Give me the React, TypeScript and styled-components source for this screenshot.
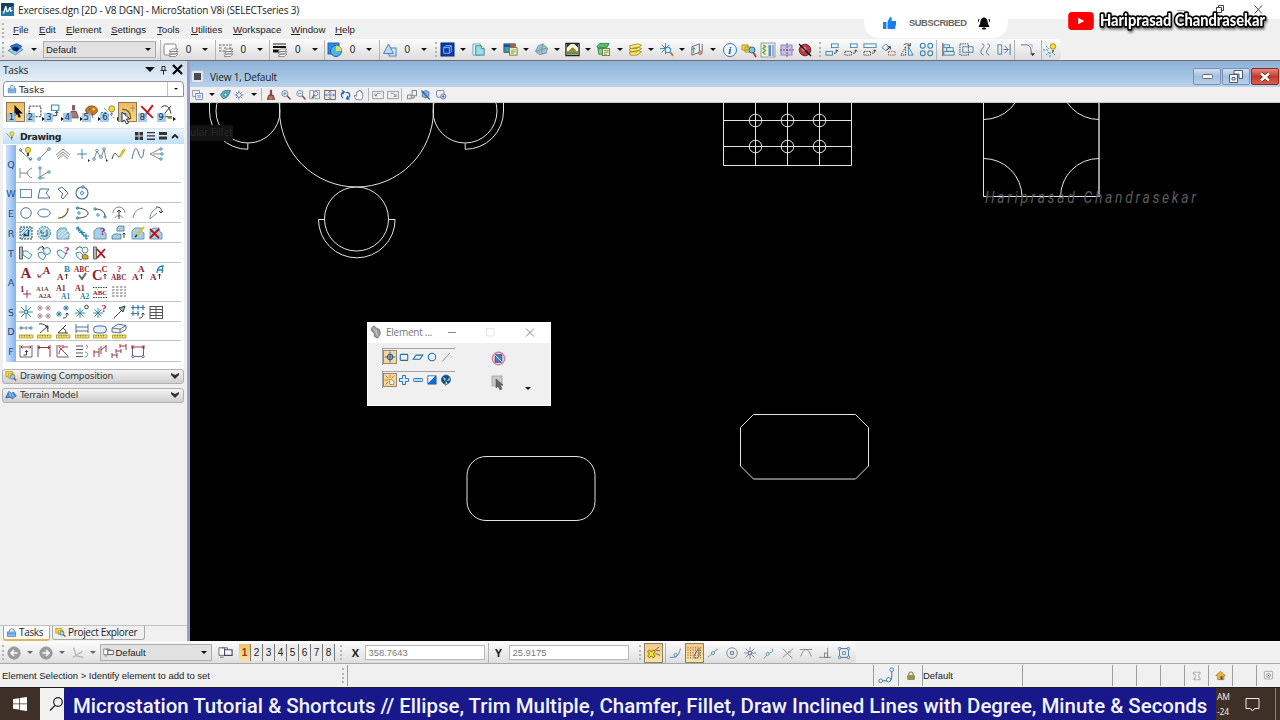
import React from 'react';
import styled, { createGlobalStyle, css } from 'styled-components';

const Global = createGlobalStyle`
  * { box-sizing: border-box; }
  body { margin: 0; background: #f0f0f0; overflow: hidden; }
  svg { display: block; flex: none; }
`;

const ui = '"Open Sans", "Noto Sans", sans-serif';
const arial = '"Liberation Sans", Arial, sans-serif';
const verdana = '"DejaVu Sans", Verdana, sans-serif';

/* ---------- icons ---------- */

const B = '#2b7fa8';
const N = '#3a5f96';
const G = '#6f7a80';
const K = '#2a2a2a';
const R = '#8c2430';

const star = 'M8 2v12M2 8h12M3.8 3.8l8.4 8.4M12.2 3.8l-8.4 8.4';
const ruler = (
  <>
    <rect x="1.5" y="12" width="13.5" height="3" fill="#f2e36a" stroke="#b09a20" strokeWidth=".8" />
    <path d="M4 12v1.6M6.5 12v1.6M9 12v1.6M11.5 12v1.6" stroke="#7d6c10" strokeWidth=".7" />
  </>
);
const hatchShape = <path d="M2 14V6l3-3h6l1 4 2 1v6z" fill="#a9cfe2" stroke="#5b93b3" />;
const layers = (
  <g fill="#fff" stroke="#777" strokeWidth=".8">
    <path d="M6 14l3-2h6l-2.500 2.500H6.500zM6 11.500l3-2h6l-2.500 2.500H6.500zM6 9l3-2h6l-2.500 2.500H6.500z" />
  </g>
);
const T = (p: { x: number; y: number; s?: number; c?: string; children: string }) => (
  <text x={p.x} y={p.y} fontSize={p.s ?? 7} fontWeight="bold" fill={p.c ?? R} stroke="none">
    {p.children}
  </text>
);

const art: Record<string, React.ReactNode> = {
  app: (
    <>
      <rect width="16" height="16" rx="1" fill="#123f63" stroke="none" />
      <path d="M0 10L16 3v13H0z" fill="#1f78a5" stroke="none" />
      <path d="M3 13L6 4l1 6c1 1 3 0 4-5l1 5 2-1" stroke="#fff" strokeWidth="1.6" />
    </>
  ),
  models: (
    <>
      <path d="M1 9l7-4 7 3-7 5z" fill="#9fcdf0" stroke="#4d90c8" />
      <path d="M3 5l6-2.500 5 2.500-5 5z" fill="#2b6fc0" stroke="#1d5aa0" />
      <ellipse cx="8" cy="7.500" rx="3" ry="1.800" fill="#0a2247" stroke="none" />
    </>
  ),
  level: <><rect x="1" y="2" width="12" height="11" rx="1.500" fill="#fff" stroke="#777" />{layers}</>,
  style: <><path d="M1 3h13M1 6h3m2 0h3m2 0h3M1 9h5" stroke="#555" strokeDasharray="2.400 1" />{layers}</>,
  weight: <><path d="M1 2h13" stroke="#111" /><path d="M1 5h13" stroke="#111" strokeWidth="2" /><path d="M1 9h6" stroke="#111" strokeWidth="3" />{layers}</>,
  fill: <><rect x="1" y="1" width="11" height="11" fill="#2d8de0" stroke="#1a5da8" /><circle cx="9" cy="9" r="5.500" fill="#49b5e8" stroke="#1a5da8" /><path d="M9 9V3.500A5.500 5.500 0 0 1 14.500 9z" fill="#d8e25c" stroke="none" /></>,
  trans: <><rect x="7" y="6" width="7" height="8" fill="#dbe9f8" stroke="#3c78bb" /><path d="M6.500 2l5 9.500h-10z" fill="#bcd8f2" stroke="#3c78bb" /></>,
  cube: <><rect x="1" y="1" width="14" height="14" fill="#0e3aa5" stroke="#0a2877" /><path d="M4 6h6v6H4zM4 6l2-2h6v6l-2 2M10 6l2-2" stroke="#8fd0ff" /></>,
  page: <><path d="M2 2h8v12H2z" fill="#d9f1f7" stroke="#7aa0a8" /><path d="M5 4h6l3 3v7H5z" fill="#8fe3ea" stroke="#50717a" /><path d="M11 4v3h3" fill="#fff" stroke="#50717a" /></>,
  refs: <><rect x="1" y="2" width="12" height="9" fill="#39a0a8" stroke="#27435a" /><path d="M1 4h7" stroke="#1d4a90" strokeWidth="2.400" /><path d="M8 4h5" stroke="#d6502c" strokeWidth="2.400" /><rect x="7" y="6" width="8" height="8" fill="#fff8c4" stroke="#6c6c40" /><path d="M8.500 8.500h5M8.500 10.500h5M8.500 12h3" stroke="#4c8a4c" strokeWidth=".8" /></>,
  cell: <><path d="M1.500 10l3-6 5-2 5 4.500-1.500 5.500-7 1.500z" fill="#9fc0cc" stroke="#7590a0" /><path d="M2 10l6-2M8 8l1 5M9.500 2L8 8l6-1.500" stroke="#5e8ca8" strokeWidth=".8" /></>,
  raster: <><rect x="1" y="1.500" width="14" height="13" fill="#fafadf" stroke="#222" strokeWidth="1.400" /><path d="M2 2l4 0-4 4zM14 2v4l-4-4z" fill="#333" stroke="none" /><path d="M3 10c2-1 4-5 6-4l4 4z" fill="#a87c32" stroke="none" /><path d="M2 10h12v3.500H2z" fill="#5f9048" stroke="none" /></>,
  green: <><path d="M1 5l3-3.500h10l-2 4-10 1z" fill="#57c070" stroke="#2c7a3c" /><path d="M2 7h10v6H3z" fill="#7fd08c" stroke="#2c7a3c" /><rect x="7" y="7" width="7.500" height="7.500" fill="#fff8c4" stroke="#6c6c40" /><path d="M8.500 9h5M8.500 11h5M8.500 13h3" stroke="#4c8a4c" strokeWidth=".9" /></>,
  stack: <g fill="#f9ea7a" stroke="#a08a1e" strokeWidth=".9"><path d="M1.500 11l9-2 4 1.500-5 3.500-7 0zM1.500 7.500l9-2 4 1.500-5 3.500-7 0zM1.500 4l9-2 4 1.500-5 3.500-7 0z" /></g>,
  snapfind: <><path d="M7 1v12M1 7h12M3 3l8 8M11 3l-8 8" stroke="#2670a8" /><circle cx="9.500" cy="8.500" r="3" fill="#d5f0ff" stroke="#2670a8" /><path d="M12 11l3 3.500" stroke="#a87432" strokeWidth="1.800" /></>,
  point: <><path d="M2 5l8-3v9l-8 3z" fill="#e9f3f5" stroke="#557" /><path d="M4 12V6M2.500 8L4 6l1.500 2" stroke="#1b8f5c" /><path d="M13 2v9" stroke="#557" /><circle cx="11" cy="11.500" r="2" fill="#e1899b" stroke="#984" /></>,
  info: <><circle cx="8" cy="8" r="6.500" fill="#f4f8ff" stroke="#3a6ec0" strokeWidth="1" /><text x="6.200" y="12" fontSize="11" fontStyle="italic" fontWeight="bold" fill="#1d4ea8" stroke="none">i</text></>,
  search: <><path d="M1 3h6v5H1zM4 5h6v5H4z" fill="#f7dc54" stroke="#a88b1a" /><circle cx="11" cy="8" r="3" fill="#76c7e8" stroke="#226890" /><path d="M12.500 10.500L15 15" stroke="#b33c22" strokeWidth="1.800" /></>,
  lib: <><rect x="1" y="1" width="14" height="14" fill="#f2f2dc" stroke="#8d98a0" /><rect x="8.500" y="3" width="2.500" height="11" fill="#5a8cd4" stroke="none" /><rect x="12" y="3" width="2" height="11" fill="#8ab4e4" stroke="none" /><path d="M3 3l2.500 1.500L3 6.500l2.500 2L3 10.500l2.500 2" stroke="#77a850" strokeWidth="1.500" /></>,
  crossed: <><rect x="2" y="3" width="11" height="10" fill="#c8c0e4" stroke="#8480b4" /><path d="M8 1v14M1 8h14" stroke="#7a3a70" strokeDasharray="2 1" /></>,
  stop: <><circle cx="8" cy="8" r="5.800" fill="#b23a44" stroke="#6c1d28" /><circle cx="7" cy="7" r="2.500" fill="#dd8080" stroke="none" /><path d="M2 2l12 12" stroke="#111" strokeWidth="1.400" /></>,
  copy: <><rect x="7" y="2" width="7" height="4" stroke={B} /><rect x="1" y="10" width="7" height="4" stroke={B} /><path d="M9.500 12c3 0 3-1 3-3.500M11 10l1.500-1.700L14 10" stroke={K} /></>,
  move: <><rect x="7" y="2" width="7" height="4" stroke={B} /><rect x="1" y="10" width="7" height="4" stroke={K} strokeDasharray="1.500 1" /><path d="M9.500 12c3 0 3-1 3-3.500M11 10l1.500-1.700L14 10" stroke={K} /></>,
  scale: <><rect x="1" y="2" width="13" height="4" stroke={B} /><rect x="1" y="10" width="7" height="4" stroke={K} strokeDasharray="1.500 1" /><path d="M9.500 12c3 0 3-1 3-3.500M11 10l1.500-1.700L14 10" stroke={K} /></>,
  rotate: <><path d="M1 6l4-4 4 4-4 3z" stroke={B} /><path d="M6 9l4-4M10 8V5H7" stroke={K} /><path d="M8 10h7v4H8z" stroke="#843" strokeDasharray="1.500 1" /></>,
  mirror: <><path d="M6 5L1 14h5z" stroke={K} strokeDasharray="1.500 1" /><path d="M9 5l5 9H9z" stroke={B} /><path d="M4 3c3-2 5-1 7 1M11 1v3H8" stroke={K} /></>,
  array: <g stroke={B} strokeWidth="1.100"><circle cx="4" cy="4" r="2.600" /><circle cx="12" cy="4" r="2.600" /><circle cx="4" cy="12" r="2.600" /><circle cx="12" cy="12" r="2.600" /></g>,
  align: <><path d="M2 1v14" stroke={K} /><path d="M3 3h6v3H3zM3 10h11v4H3zM6 6h7v4H6z" stroke={B} /></>,
  stretch: <><path d="M1 2h9v12H1z" stroke={K} strokeDasharray="1.500 1" /><path d="M4 5h11v6H4z" stroke={B} /></>,
  wave: <path d="M4 2c5 1 1 4 0 6s-2 4 2 6M10 2c5 1 1 4 0 6s-2 4 2 6" stroke={N} />,
  trim: <><path d="M1 3h4v10H1z" stroke={B} /><path d="M14 2v12M8 4l4 4-4 4M7 8h5" stroke={N} /></>,
  fillet: <><path d="M1 3h5c5 0 6 4 6 9" stroke={N} /><path d="M9 3h4v4" stroke="#aaa" /><path d="M11 12h5l-2.500 3z" fill={K} stroke="none" /></>,
  bulb: <><path d="M4 4l3 3M1 8h5M4 13l3-3M8 10v5M10 10l3 3" stroke={B} strokeDasharray="2 1" /><circle cx="11" cy="4.500" r="2.800" fill="#f5dd3e" stroke="#a48b1c" /><path d="M10 8h2v2h-2z" fill="#777" stroke="none" /></>,
  vattr: <><rect x="1" y="2" width="9" height="8" stroke={G} /><rect x="5" y="6" width="9" height="8" fill="#fff" stroke={N} /><path d="M7 9h5M7 11h5" stroke={N} /></>,
  vstyle: <><path d="M2 9c1-5 6-7 12-6-1 6-5 10-9 10z" fill="#57b5bd" stroke="#1d6f8c" /><circle cx="8" cy="8" r="2" fill="#c8eef0" stroke="#1d6f8c" /></>,
  sun: <><path d={star} stroke={N} /><circle cx="8" cy="8" r="3" fill="#fff" stroke={N} /></>,
  brush: <><path d="M8 1v7" stroke="#8a4a3a" strokeWidth="3" /><path d="M5 8h6l2 6H3z" fill="#a65c48" stroke="#5b3025" /><path d="M6.500 10v4M9 10v4" stroke="#e0b0a0" /></>,
  zin: <><circle cx="6.500" cy="6" r="4" stroke={N} /><path d="M4.500 6h4M6.500 4v4" stroke={N} /><path d="M9.500 9l4.500 5" stroke="#8a4a3a" strokeWidth="2" /></>,
  zout: <><circle cx="6.500" cy="6" r="4" stroke={N} /><path d="M4.500 6h4" stroke={N} /><path d="M9.500 9l4.500 5" stroke="#8a4a3a" strokeWidth="2" /></>,
  warea: <><path d="M1 2h5v11H1zM8 2h6v11H8z" stroke={G} /><circle cx="9" cy="6" r="2.800" fill="#fff" stroke={N} /><path d="M7 8l-3 4" stroke={N} strokeWidth="1.400" /></>,
  fit: <><rect x="1" y="2" width="14" height="12" stroke={K} /><path d="M8 3v10M2 8h12M6 5l2-2 2 2M6 11l2 2 2-2M4 6L2 8l2 2M12 6l2 2-2 2" stroke={N} /></>,
  rot: <><path d="M5 12C2 9 3 5 6 4M4 2l3 2-2 3M9 5c4-2 6 2 5 5-1 2-3 3-4 3M12 9l-2 4 4 1" stroke="#1a6cc0" strokeWidth="1.700" /></>,
  hand: <path d="M4 14L1.500 9 3 8l1.500 2V4.500h1.700V3h1.800V2h1.800v1.500h1.700V5H13v5l-1.500 4.500z" fill="#fff" stroke={N} />,
  vprev: <><rect x="1" y="3" width="14" height="10" stroke={G} /><path d="M11 6C8 5 6 6 5 9M4 6v3h3" stroke={N} /></>,
  vnext: <><rect x="1" y="3" width="14" height="10" stroke={G} /><path d="M5 6c3-1 5 1 6 3M12 7v3H9" stroke={N} /></>,
  vcopy: <><path d="M8 2h6v7H8zM2 8h5v5H2zM11 9v3H7" stroke={G} strokeWidth="1.200" /></>,
  cubeclip: <><path d="M3 4l5-2 4 2v5l-4 3-5-2z" fill="#81b6e2" stroke={N} /><path d="M2 2l11 12" stroke={N} strokeWidth="1.600" /></>,
  clipmask: <><rect x="2" y="2" width="10" height="9" rx="2" stroke={N} /><circle cx="11" cy="10" r="3.500" fill="#cfd8e8" stroke={N} /><path d="M11 8v4M9 10h4" stroke={N} /></>,
  house: <><path d="M2 7h12v7H2z" fill="#8fc4ea" stroke="#2d6ca4" /><path d="M5 7V4l3-2 4 2v3" fill="#cfe6f8" stroke="#2d6ca4" /><path d="M2 10h12" stroke="#2d6ca4" /></>,
  arrow: <path d="M7 1v11l2.500-2.500L11 13l2-.8L11.500 9H15z" fill="#111" stroke="none" />,
  fence: <rect x="3" y="2" width="11" height="10" stroke={K} strokeDasharray="2 1" />,
  copyT: <><rect x="7" y="1" width="7" height="5" stroke={B} /><path d="M12 7v4H8M10.500 8.500L12 7l1.500 1.500" stroke={K} /></>,
  brushT: <><path d="M10 1v5" stroke="#8a5a62" strokeWidth="3" /><path d="M7.500 7h5l2 6H7z" fill="#a87a7a" stroke="#6d4a54" /></>,
  palette: <><ellipse cx="9" cy="6" rx="5.500" ry="4.200" fill="#d0742a" stroke="#8c4814" /><circle cx="7" cy="5" r="1.200" fill="#2e9e52" stroke="none" /><circle cx="11" cy="5" r="1.200" fill="#e8db40" stroke="none" /><path d="M10 9v4" stroke="#843" /></>,
  filletT: <><path d="M3 5c6 0 8 3 8 9" stroke="#6c6a3a" strokeWidth="1.300" /><path d="M13 1v6M10 4h5M3 9h4" stroke="#a18a5c" strokeWidth=".8" /></>,
  xred: <path d="M3 2l11 11M14 1L5 13" stroke="#c4161c" strokeWidth="1.800" />,
  measure: <><path d="M5 3c4-3 8-1 9 6M8 9l6-7M3 12h12" stroke={K} /><path d="M11 13h4" stroke="#a48b1c" strokeWidth="2" /></>,
  lineb: <><path d="M2 4l4 4 7 6" stroke={G} /><circle cx="12.500" cy="13" r="1.300" stroke={B} /><circle cx="10" cy="4" r="2.600" fill="#f5e03e" stroke="#a48b1c" /><path d="M9 7h2v3H9z" fill="#443" stroke="none" /><circle cx="2.500" cy="4" r="1.200" stroke={B} /></>,
  line: <><path d="M4 12l8-8" stroke={G} /><circle cx="3" cy="13" r="1.300" stroke={B} /><circle cx="13" cy="3" r="1.300" stroke={B} /></>,
  multi: <path d="M1 9l7-6 7 6M3 13l5-4.500 5 4.500M2 11l6-5.200 6 5.200" stroke={G} strokeWidth=".9" />,
  plus: <><path d="M8 3v10M3 8h10" stroke={B} /><path d="M14 13v3l2-1.500z" fill={K} stroke="none" /></>,
  poly: <><path d="M2 13l3-8 4 7 3-9 2 10" stroke={G} /><g stroke={B} strokeWidth=".8" fill="#fff"><circle cx="5" cy="4.500" r="1.300" /><circle cx="12" cy="3" r="1.300" /><circle cx="2" cy="13" r="1.300" /><circle cx="9" cy="11" r="1.300" /></g><path d="M14 13v3l2-1.500z" fill={K} stroke="none" /></>,
  stream: <><path d="M1 13c4-13 5 1 8-3l3-6" stroke={K} /><path d="M9 11l5-8" stroke="#d8c83e" strokeWidth="2.500" /></>,
  curve: <path d="M2 13C5-2 7 2 9 8s4 6 5-5" stroke={N} />,
  angle: <><path d="M12 3L2 8l10 5M5 8h9" stroke={G} /><g stroke={B} fill="#fff"><circle cx="13" cy="3" r="1.200" /><circle cx="14" cy="8" r="1.200" /><circle cx="13" cy="13" r="1.200" /></g></>,
  mindist: <path d="M2 3v10M2 8h7M14 3c-6 2-6 8 0 10" stroke={G} />,
  perp: <><path d="M4 2v11M4 12l8-5M2 13h7" stroke={G} /><circle cx="4" cy="3" r="1.200" fill="#fff" stroke={B} /><circle cx="13" cy="7" r="1.200" fill="#fff" stroke={B} /><circle cx="4" cy="13" r="1.200" fill="#fff" stroke={B} /></>,
  rect: <rect x="2.500" y="4.500" width="11" height="8" stroke="#4a7fb4" />,
  shape: <path d="M2 13l2-9h9l-3 4 4 5z" stroke={N} />,
  ortho: <path d="M3 4l4-2 6 6-5 6-2-2 2-3z" stroke={N} />,
  polygon: <><circle cx="8" cy="8" r="6" stroke="#4a6ab4" strokeWidth="1.100" /><circle cx="8" cy="8" r="1.500" stroke={B} /><circle cx="9" cy="2" r="1.200" fill="#fff" stroke={N} /></>,
  circle: <circle cx="8" cy="8" r="5.300" stroke="#3d648c" />,
  ellipse: <ellipse cx="8" cy="8" rx="6.200" ry="4" stroke="#3d648c" />,
  arc: <path d="M3 13c6 0 10-4 10-10" stroke="#7a6a28" strokeWidth="1.200" />,
  half: <><path d="M3 3c8 0 12 4 11 6-1 3-6 4-11 4" stroke={K} strokeWidth=".9" /><circle cx="3.500" cy="3" r="1.200" stroke={B} /><circle cx="3.500" cy="13" r="1.200" stroke={B} /><circle cx="5" cy="8" r="1.200" stroke={B} /></>,
  quarter: <><path d="M3 4c7 0 10 3 10 8" stroke={K} strokeWidth=".9" /><circle cx="3" cy="4" r="1.200" stroke={B} /><circle cx="13" cy="12" r="1.200" stroke={B} /><circle cx="6" cy="10" r="1.200" stroke={B} /></>,
  arcup: <><path d="M2 8a6 6 0 1 1 12 0M4 13c1-3 7-3 8 0" stroke={G} /><path d="M8 5v9M6 7l2-2 2 2" stroke={K} /></>,
  arcs: <path d="M3 13c1-6 4-9 10-10" stroke={G} />,
  arcm: <><path d="M2 14c0-6 3-9 7-11M2 14l7-6" stroke={G} /><path d="M8 2c5 0 6 2 5 6M11 6l2 2 2-2" stroke={K} /></>,
  hatch: <><rect x="2" y="2" width="12" height="12" fill="#c7e2ee" stroke={K} strokeDasharray="2 1" /><path d="M3 7l4-4M3 11l8-8M4 14l9-10" stroke={B} strokeWidth=".8" /><path d="M5.500 10.500h5V5M5.500 10.500l2-2" stroke="#17495f" strokeWidth="1.300" /></>,
  xhatch: <><circle cx="8" cy="8" r="6.500" fill="#a9d4e4" stroke={B} strokeDasharray="2 1" /><path d="M3 7l4-4M3 11l8-8M5 13l8-8" stroke="#fff" strokeWidth=".8" /><path d="M5 11h6V5M5 5v3h3" stroke="#17495f" /></>,
  pattern: <>{hatchShape}<path d="M4 13L13 5M3 10l7-6M7 14l7-5" stroke="#fff" strokeWidth=".7" /></>,
  lpat: <path d="M2 4h5M4.500 1.500v5M5 7.500h6M8 5v5M9 11h6M12 8.500v6M2.500 2l11 12" stroke="#2d86b8" strokeWidth="1.200" />,
  patq: <>{hatchShape}<T x={8} y={10} s={11} c="#a0149a">?</T></>,
  patm: <><path d="M6 6V3l2-2h5v5z" fill="#a9cfe2" stroke="#4b7f9b" /><path d="M1 14v-3l2-2h7v5z" fill="#a9cfe2" stroke="#4b7f9b" /><path d="M13 13V8M11.500 9.500L13 8l1.500 1.500" stroke={K} /></>,
  pate: <>{hatchShape}<path d="M7 10l7-8" stroke="#d8c23e" strokeWidth="2.500" /><path d="M5 12l2-2" stroke={K} strokeWidth="1.500" /></>,
  patx: <>{hatchShape}<path d="M2 4l9 9M11 4l-9 9" stroke="#b3141c" strokeWidth="1.800" /></>,
  tag: <><path d="M1.500 2h3v12h-3z" fill="#b8b8b8" stroke="#555" /><path d="M5 6h4l5 4-3 4-6-4z" fill="#e9f6fb" stroke="#4b7f9b" /></>,
  tag2: <><path d="M2 8l4-1 4 4-3 4-4-3z" fill="#e9f6fb" stroke="#4b7f9b" /><circle cx="11" cy="6" r="3.500" fill="#e9f6fb" stroke="#4b7f9b" /><path d="M2 5c1-3 4-4 6-2M6 1l2 2-2 1.500" stroke={K} /></>,
  tagq: <><path d="M2 6l4-1 5 4-3 5-5-4z" fill="#e9f6fb" stroke="#4b7f9b" /><T x={9} y={9} s={11} c="#a0149a">?</T></>,
  tag3: <><path d="M2 8l4-1 4 4-3 4-4-3z" fill="#e9f6fb" stroke="#4b7f9b" /><circle cx="11" cy="5" r="3" fill="#e9f6fb" stroke="#4b7f9b" /><path d="M8 11l3-2 3 2v3H9z" fill="#d8a53a" stroke="#8c6414" /><path d="M2 5c1-3 4-4 6-2" stroke={K} /></>,
  tagx: <><path d="M1.500 2h3v12h-3z" fill="#b8b8b8" stroke="#555" /><path d="M5 4l8 9M13 4l-8 9" stroke="#b3141c" strokeWidth="1.800" /></>,
  A1: <T x={2.5} y={13} s={15}>A</T>,
  A2: <><T x={7} y={9} s={10}>A</T><path d="M8 8c-2 1-3 3-6 4M2 9v3h3" stroke={R} /></>,
  A3: <><T x={2} y={15} s={9}>A</T><T x={9} y={7} s={9} c={B}>B</T><path d="M11.500 14V9M10 10.500L11.500 9l1.500 1.500" stroke={K} /></>,
  A4: <><T x={0} y={7} s={7.3}>ABC</T><path d="M5 10l3 4 4-6" stroke="#666" strokeWidth="2" /></>,
  A5: <><T x={0} y={15} s={14.5}>C</T><T x={9.5} y={7} s={8.5}>C</T><path d="M13 14V9M11.500 10.500L13 9l1.500 1.500" stroke={K} /></>,
  A6: <><T x={6} y={7} s={9} c="#b0207a">?</T><T x={0} y={14.5} s={7.3}>ABC</T></>,
  A7: <><T x={2} y={15} s={9}>A</T><T x={8} y={7} s={9}>A</T><path d="M11.500 14V9M10 10.500L11.500 9l1.500 1.500" stroke={K} /></>,
  A8: <><T x={2} y={15} s={9}>A</T><path d="M9 8c0-4 2-7 6-7-1 3 0 5-1 7M9 5h5" stroke={B} strokeWidth="1.300" /><path d="M11.500 14V9M10 10.500L11.500 9l1.500 1.500" stroke={K} /></>,
  A9: <><T x={2} y={8} s={9}>1</T><path d="M9 6v8M5 10h8" stroke={R} /></>,
  A10: <><T x={0} y={7} s={6.5} c="#555">A1A</T><T x={2.5} y={14} s={6.5}>A2A</T></>,
  A11: <><T x={1} y={7} s={8}>A1</T><T x={6} y={14.5} s={7.5} c={B}>A1</T></>,
  A12: <><T x={1} y={7} s={8}>A1</T><T x={6} y={14.5} s={7.5} c={B}>A2</T></>,
  A13: <><path d="M1 3.500h14M1 13.500h14" stroke={K} strokeDasharray="1.500 1" /><T x={0.8} y={11} s={6.8}>ABC</T></>,
  A14: <path d="M1 3h14M1 6h14M1 9h14M1 12h14" stroke="#555" strokeDasharray="2.500 1.500" strokeWidth=".9" />,
  star1: <><path d="M8 1v14M1 8h14M3 3l10 10M13 3L3 13" stroke={B} /><circle cx="8" cy="8" r="1.500" fill="#fff" stroke={B} /></>,
  star4: <g stroke="#b0808a"><path d="M4 1v6M1 4h6M2 2l4 4M6 2L2 6M12 1v6M9 4h6M10 2l4 4M14 2l-4 4M4 9v6M1 12h6M2 10l4 4M6 10l-4 4M12 9v6M9 12h6M10 10l4 4M14 10l-4 4" strokeWidth=".8" /></g>,
  star2: <><path d="M11 1v6M8 4h6M9 2l4 4M13 2L9 6M4 7v6M1 10h6M2 8l4 4M6 8l-4 4" stroke={B} /><path d="M8 14c3 0 4-1 4-5M10.500 10.500L12 9l1.500 1.500" stroke={K} /></>,
  staro: <><path d="M6 4v10M1 9h10M2.500 5.500l7 7M9.500 5.500l-7 7" stroke={B} /><circle cx="12.500" cy="3" r="1.800" stroke={K} /></>,
  starq: <><path d="M6 4v10M1 9h10M2.500 5.500l7 7M9.500 5.500l-7 7" stroke={B} /><T x={9.5} y={8} s={10} c="#a0149a">?</T></>,
  leader: <><path d="M3 14l8-8" stroke={K} /><path d="M8 4l6-2-2 6z" fill="#76c7c0" stroke={K} /></>,
  stars: <><path d="M3 1v5M1 3.500h5M8 1v5M6 3.500h5M13 1v5M11 3.500h4M3 7v5M1 9.500h5M8 7v5M6 9.500h3" stroke={B} strokeWidth="1.200" /><path d="M9 14c3 0 4-1 4-5M11.500 10.500L13 9l1.500 1.500" stroke={K} /></>,
  table: <><rect x="2" y="2.500" width="12.500" height="12" stroke="#444" /><path d="M2 5.500h12M2 8.500h12M2 11.500h12M8 2.500v12" stroke="#444" /></>,
  D1: <><path d="M3 5h3M10 5h3" stroke={B} /><circle cx="3" cy="5" r="1.200" stroke={B} /><circle cx="8" cy="5" r="1.200" stroke={G} /><circle cx="13" cy="5" r="1.200" stroke={B} />{ruler}</>,
  D2: <><path d="M3 1c5-1 9 2 9 8M4 10l8-7M9 3h3v3" stroke={K} />{ruler}</>,
  D3: <><path d="M3 10l8-8M3 10h10M8 5c2 1 3 3 3 5" stroke={K} />{ruler}</>,
  D4: <><path d="M2 1v9M14 1v9M2 4h12M2 8h12" stroke={N} />{ruler}</>,
  D5: <><rect x="1.500" y="3" width="13" height="7" rx="3.500" fill="#e5f2fb" stroke={N} />{ruler}</>,
  D6: <><path d="M1 5l6-4 8 1.500v4l-6 3.500-8-1zM1 5l8 1 6-3.500M9 6v4" fill="#eee" stroke="#4d6488" />{ruler}</>,
  F1: <><path d="M2 2v12h12V2" stroke="#555" /><path d="M3 4h10M4.500 2.500L3 4l1.500 1.500M11.500 2.500L13 4l-1.500 1.500" stroke={R} /><path d="M5.500 12h3V7.500M7 9l1.500-1.500L10 9" stroke={K} /></>,
  F2: <path d="M2 2v12M14 2v12M2 4.500h12M4 3L2 4.500 4 6M12 3l2 1.500L12 6" stroke={R} />,
  F3: <><path d="M2 2v12h12" stroke="#555" /><path d="M4 4l9 9M4 11C4 6 8 3 13 4M3 3h6" stroke={R} /></>,
  F4: <><path d="M2 3h7M2 6.500h7M2 10h7M2 13.500h7" stroke="#444" /><path d="M12 2c3 1 1 3 0 4M11 9c4 0 3 5 0 5" stroke={G} /></>,
  F5: <path d="M2 14V7M7 14V5M2 9h5M9 7l5-4M9 11V3M14 9V2" stroke={R} />,
  F6: <path d="M5 8h5M5 6v4M10 6v4M1 12h5M1 10v5M6 10v5M9 3h6M9 1v4M15 1v6" stroke={R} />,
  F7: <><path d="M2.500 4v9.500h11V4" stroke="#555" /><path d="M2 2v4M14 2v4M2 4h12M4 2.500L2.500 4 4 5.500M12 2.500L13.500 4 12 5.500" stroke={R} /><circle cx="3" cy="13.500" r="1.200" fill="#fff" stroke={N} /><circle cx="13" cy="13.500" r="1.200" fill="#fff" stroke={N} /></>,
  dcomp: <><path d="M1 2h9v7H1z" fill="#f6d63a" stroke="#a88b1a" /><path d="M5 5h7v6H5z" fill="#f6e88a" stroke="#a88b1a" /><circle cx="10" cy="9" r="3" fill="#9bd0e8" stroke={N} /><path d="M12 11l3 3" stroke="#b33c22" strokeWidth="1.800" /></>,
  terrain: <><path d="M1 12l4-9 4 3 2-2 4 5-5 4-3-2z" fill="#4f94d4" stroke="#1e5592" /><path d="M5 3l3 7M9 6l3 5" stroke="#cfe6f8" /></>,
  drawhead: <><path d="M2 3l5 6 4 5" stroke={G} /><circle cx="10" cy="4" r="3" fill="#f5e03e" stroke="#a48b1c" /><path d="M9 8h2v3H9z" fill="#443" stroke="none" /></>,
  target: <><circle cx="8" cy="8" r="3.500" stroke="#1a5f9c" strokeWidth="1.400" /><path d="M8 1v14M1 8h14" stroke="#1a5f9c" strokeWidth="1.200" /></>,
  eblock: <rect x="3" y="4.500" width="10" height="8" rx="1" stroke="#1e6fa8" strokeWidth="1.400" />,
  epara: <path d="M5.500 5.500h9l-4 5.500h-9z" stroke="#1e6fa8" strokeWidth="1.400" />,
  ecircle: <circle cx="8" cy="8" r="5" stroke="#1e6fa8" strokeWidth="1.400" />,
  eline: <path d="M3 14L13 3" stroke="#888" strokeWidth="1.300" />,
  enew: <><path d="M2 2l4 4M8 1v4M14 2l-4 4M1 8h4M2 14l4-4" stroke="#b87a28" strokeWidth="1.300" /><path d="M7 7l6 2v5H8z" fill="#fff" stroke="#8a6a3a" /></>,
  eadd: <path d="M6 2h4v4h4v4h-4v4H6v-4H2V6h4z" fill="#d6ecfa" stroke="#1e6fa8" strokeWidth="1.200" />,
  esub: <rect x="2" y="6" width="12" height="4" rx="1" fill="#bcdcf2" stroke="#1e6fa8" strokeWidth="1.200" />,
  einv: <><rect x="2.500" y="2.500" width="11" height="11" fill="#0f6cd0" stroke="#1558a0" /><path d="M3 3h9l-9 9z" fill="#fff" stroke="none" /></>,
  eall: <><circle cx="8" cy="7.500" r="6" fill="#12507e" stroke="#0c3c60" /><path d="M4 4l4 2-2 4zM9 9l4-5v5z" fill="#8fd0f0" stroke="none" /><path d="M7 8v7l3-2" fill="#fff" stroke="#222" strokeWidth=".8" /></>,
  edisable: <><circle cx="8" cy="8" r="6.600" fill="#f6dbe2" stroke="#cf7d90" strokeWidth="1.500" /><path d="M4.500 4h7v8h-7z" fill="#4d84be" stroke="#1c4684" /><path d="M4 4l8 8" stroke="#d8e8f8" /></>,
  ecursor: <><rect x="2" y="1" width="10" height="10" fill="#c9c9c9" stroke="#a5a5a5" /><path d="M6 4v9l2-2 2 4 2-1-2-4h3z" fill="#666" stroke="#555" strokeWidth=".6" /></>,
  dlg: <><path d="M3 3l3-2 3 3 3 1 1 5-3 5-4-2 0-4-3-2z" fill="#9a9a9a" stroke="#6e6e6e" /><path d="M5 3l4 8M8 5l2 8" stroke="#d0d0d0" /></>,
  back: <><circle cx="8" cy="8" r="7" fill="#9c9c9c" stroke="#8a8a8a" /><path d="M12 8H5M8 4.500L4.500 8 8 11.500" stroke="#fff" strokeWidth="1.600" /></>,
  fwd: <><circle cx="8" cy="8" r="7" fill="#9c9c9c" stroke="#8a8a8a" /><path d="M4 8h7M8 4.500l3.500 3.500L8 11.500" stroke="#fff" strokeWidth="1.600" /></>,
  axis: <path d="M3 2l3 9M5 11l9 2M5 11l-3 2M7 10l6-4" stroke="#b0b0b0" strokeWidth="1.300" />,
  vgroup: <><path d="M1 3h6v8H1z" fill="#fff" stroke="#556" /><path d="M7 5h8v6H7z" fill="#fff" stroke="#446" strokeWidth="1.200" /><path d="M2 13h4M4 3h6v2" stroke="#556" /></>,
  snapx: <><path d="M8 7l6-5M10 9l5 2M11 6h4" stroke="#555" /><path d="M2.500 6l6.500 7M9 6l-6.500 7" stroke="#6e6010" strokeWidth="3.400" /><path d="M3 6.500l5.500 6M8.500 6.500L3 12.500" stroke="#f9ee3a" strokeWidth="2" /></>,
  n1: <><path d="M1 14h5c4 0 7-5 8-11" stroke={N} /><circle cx="8" cy="11" r="2" stroke={B} /></>,
  n2: <><path d="M2 2v12M4.500 2v12M7 2v12M9.500 2v12M12 2v12M14.500 2v12" stroke="#a8743e" strokeDasharray="1.500 1" /><path d="M13 3v8c-2 3-5 3-5 0l4-7" stroke={N} strokeWidth=".8" /></>,
  n3: <><path d="M2 13L14 3" stroke={G} /><circle cx="8" cy="8" r="1.700" fill="#fff" stroke={B} /></>,
  n4: <><circle cx="8" cy="8" r="6" stroke={G} /><rect x="6.500" y="6.500" width="3" height="3" stroke={N} /></>,
  n5: <><path d="M8 1v14M1 8h14M3 3l10 10M13 3L3 13" stroke={G} /><circle cx="8" cy="8" r="2" fill="#fff" stroke={N} /></>,
  n6: <><path d="M2 14c3-1 3-5 6-6s5 0 4-5" stroke={G} /><circle cx="6.500" cy="9" r="1.700" fill="#fff" stroke={B} /></>,
  n7: <><path d="M2 3l11 11M14 3L2 13" stroke={G} /><path d="M9 6l2 2" stroke={N} /></>,
  n8: <path d="M1 4h14M2 12c2-6 4-8 6-8s4 2 6 8" stroke={G} />,
  n9: <><path d="M1 13h14M11 13V2" stroke={G} /><rect x="7.500" y="8" width="3.500" height="5" stroke={G} /></>,
  n10: <><rect x="3" y="3" width="10" height="10" stroke={N} /><rect x="6.500" y="6.500" width="3" height="3" stroke={B} /><g fill="#e7f2ff" stroke={N}><circle cx="3" cy="3" r="1.500" /><circle cx="13" cy="3" r="1.500" /><circle cx="3" cy="13" r="1.500" /><circle cx="13" cy="13" r="1.500" /></g></>,
  snapmode: <><path d="M3 13h8c2 0 2-2 2-9" stroke={N} /><circle cx="2.500" cy="13" r="1.700" fill="#fff" stroke={B} /><circle cx="10" cy="12" r="2" fill="#fff" stroke={B} /><circle cx="13" cy="2.500" r="1.700" fill="#fff" stroke={B} /></>,
  lock: <><path d="M4.500 7V5a3.500 3.500 0 0 1 7 0v2" stroke="#6e6c28" strokeWidth="1.500" /><rect x="2.500" y="7" width="11" height="6.500" rx="1" fill="#9a9640" stroke="#6a6824" /></>,
  scroll: <path d="M2 2h11v3h-2v6h2v3H3v-2h2V5H2z" fill="#f6f6f6" stroke="#777" />,
  home: <><path d="M1 8l7-6 7 6-2 1v5H4V9z" fill="#f0b336" stroke="#9c6a14" /><path d="M8 9h3v5H8z" fill="#3d4a9a" stroke="none" /></>,
  disk: <><rect x="2" y="2" width="12" height="11" rx="1" fill="#eee" stroke="#888" /><circle cx="8" cy="8" r="3" stroke="#777" /><circle cx="8" cy="8" r="1" fill="#555" stroke="none" /></>,
};

const Icon = ({ n, s = 16 }: { n: string; s?: number }) => (
  <svg width={s} height={s} viewBox="0 0 16 16" fill="none" strokeWidth=".9" fontFamily='"Liberation Serif", serif'>
    {art[n]}
  </svg>
);

/* ---------- shared parts ---------- */

const Slot = styled.span<{ $w: number; $pressed?: boolean }>`
  flex: none;
  width: ${(p) => p.$w}px;
  height: 20px;
  display: flex;
  align-items: center;
  justify-content: center;
  ${(p) => p.$pressed && css`background: linear-gradient(#f6c986, #fbe0a4); border: 1px solid #8b8164;`}
`;
const Caret = styled.i<{ $c?: string; $s?: number }>`
  border: ${(p) => p.$s ?? 3}px solid transparent;
  border-top: ${(p) => (p.$s ?? 3) + 0.5}px solid ${(p) => p.$c ?? '#111'};
  border-bottom: 0;
`;
const Divider = styled.i<{ $h?: number }>`
  flex: none;
  width: 1px;
  height: ${(p) => p.$h ?? 20}px;
  background: #b4b4b4;
`;
const Grip = styled.i`
  flex: none;
  width: 3px;
  height: 15px;
  border-left: 2px dotted #b5b5b5;
`;
const Spacer = styled.i<{ $w: number }>`
  flex: none;
  width: ${(p) => p.$w}px;
`;
const Push = styled.i`
  margin-left: auto;
`;

/* ---------- window frame ---------- */

const Window = styled.div`
  position: relative;
  width: 1280px;
  height: 720px;
  display: flex;
  flex-direction: column;
  background: #f0f0f0;
  color: #222;
  overflow: hidden;
`;
const TitleBar = styled.header`
  height: 19px;
  flex: none;
  background: #fff;
  display: flex;
  align-items: center;
  padding: 0 17px 0 1px;
  font: 10px/18px ${ui};
  letter-spacing: -0.18px;
  white-space: nowrap;
`;
const TitleText = styled.span`
  margin-left: 4px;
  flex: 1;
`;
const MenuBar = styled.nav`
  height: 20px;
  flex: none;
  display: flex;
  align-items: center;
  padding: 2px 0 0 2px;
  font: 9.700px/18px ${arial};
`;
const MenuItem = styled.span<{ $w: number }>`
  width: ${(p) => p.$w}px;
  white-space: nowrap;
  &::first-letter { text-decoration: underline; }
`;
const ToolRow = styled.div`
  height: 22px;
  flex: none;
  display: flex;
  border-bottom: 1px solid #6c6f74;
`;
const ToolStrip = styled.div`
  width: 1061px;
  display: flex;
  align-items: center;
  background: linear-gradient(#fdfdfd, #dcdcdc);
  border-radius: 0 4px 4px 0;
  font: 10px ${arial};
`;
const Combo = styled.div<{ $w: number }>`
  flex: none;
  width: ${(p) => p.$w}px;
  height: 17px;
  display: flex;
  align-items: center;
  justify-content: space-between;
  padding: 0 4px 0 2px;
  background: #e1e1e1;
  border: 1px solid #adadad;
  font: 9.500px ${arial};
`;
const ComboLabel = styled.span`
  display: flex;
  align-items: center;
  gap: 2px;
`;
const Body = styled.div`
  height: 580px;
  flex: none;
  display: flex;
`;

/* ---------- task panel ---------- */

const Panel = styled.aside`
  width: 190px;
  flex: none;
  display: flex;
  flex-direction: column;
  border-right: 3px solid #9c9fce;
  background: #f0f0f0;
`;
const PanelHead = styled.div`
  height: 20px;
  flex: none;
  display: flex;
  align-items: center;
  padding: 0 4px 3px 3px;
  background: linear-gradient(#c9dced, #e6eff8);
  font: 10.200px/16px ${ui};
  letter-spacing: -0.250px;
`;
const HeadGlyphs = styled.span<{ $gap?: number }>`
  margin-left: auto;
  display: flex;
  align-items: center;
  gap: ${(p) => p.$gap ?? 4}px;
`;
const TaskSelect = styled.div`
  height: 16px;
  flex: none;
  margin: 0 3px 0 3px;
  display: flex;
  align-items: center;
  background: #fff;
  border: 1px solid #8d949c;
  border-radius: 4px 4px 0 0;
  font: 9.500px ${verdana};
  padding-left: 3px;
  gap: 2px;
`;
const SelectArrow = styled.span`
  margin-left: auto;
  width: 16px;
  height: 14px;
  border-left: 1px solid #c4c4c4;
  display: flex;
  align-items: center;
  justify-content: center;
`;
const TaskTools = styled.div`
  height: 32px;
  flex: none;
  margin: 0 3px;
  padding: 5px 0 0 3px;
  display: flex;
  background: #fff;
  border-bottom: 1px solid #dfe5ec;
`;
const TaskTool = styled.span<{ $on?: boolean }>`
  position: relative;
  width: 18.700px;
  height: 20px;
  display: flex;
  align-items: flex-start;
  justify-content: center;
  padding-top: 2px;
  ${(p) => p.$on && css`background: linear-gradient(#f3b65e, #fbd98c); box-shadow: inset 0 0 0 1px #8b7a55;`}
`;
const KeyBadge = styled.b`
  position: absolute;
  left: 1px;
  bottom: 0;
  width: 9px;
  height: 9px;
  background: rgba(139, 190, 232, 0.75);
  color: #14304e;
  font: 8.500px/9px ${verdana};
  text-align: center;
`;
const MoreDot = styled.i`
  position: absolute;
  right: -2px;
  bottom: 1px;
  border: 2px solid transparent;
  border-left: 3px solid #111;
  border-right: 0;
`;
const DrawHead = styled.div`
  height: 15px;
  flex: none;
  margin: 0 3px;
  padding: 0 5px 1px 2px;
  display: flex;
  align-items: center;
  gap: 4px;
  background: linear-gradient(#eaf4fd, #bfe0f6);
  font: bold 9.300px ${verdana};
  letter-spacing: -0.350px;
`;
const Palette = styled.div`
  width: 181px;
  flex: none;
  margin-left: 3px;
  padding: 1px 0 7px 3px;
  background: #fff;
`;
const PaletteRow = styled.div<{ $h: number }>`
  height: ${(p) => p.$h}px;
  display: flex;
`;
const RowKey = styled.div`
  width: 10px;
  display: flex;
  align-items: center;
  justify-content: center;
  background: linear-gradient(90deg, #cfe3fb, #84b3ee);
  color: #2b4a78;
  font: 9.500px ${verdana};
`;
const RowIcons = styled.div`
  width: 165px;
  display: grid;
  grid-template-columns: repeat(8, 18.650px);
  padding-left: 0.500px;
  align-items: center;
  justify-items: center;
  border-bottom: 1px solid #c3c3c3;
`;
const Group = styled.div`
  height: 15px;
  flex: none;
  margin: 0 3px 4px 2px;
  padding: 0 4px 1px 2px;
  display: flex;
  align-items: center;
  gap: 3px;
  background: linear-gradient(#f4f4f4, #cfcfcf);
  border: 1px solid #b0b0b0;
  border-radius: 3px;
  color: #333;
  font: 9px ${verdana};
  letter-spacing: -0.180px;
  white-space: nowrap;
`;
const Tabs = styled.div`
  margin-top: auto;
  height: 16px;
  flex: none;
  display: flex;
  padding-left: 3px;
  gap: 2px;
  border-top: 1px solid #c2c2c2;
  font: 10px/13px ${ui};
  letter-spacing: -0.320px;
`;
const Tab = styled.div<{ $w: number; $on?: boolean }>`
  width: ${(p) => p.$w}px;
  height: ${(p) => (p.$on ? 15 : 14)}px;
  display: flex;
  align-items: center;
  gap: 2px;
  padding-left: 2px;
  white-space: nowrap;
  border: 1px solid #a8a8a8;
  border-top: 0;
  border-radius: 0 0 3px 3px;
  ${(p) => p.$on && css`background: #fdfdfd; border-bottom: 2px solid #e2b64a;`}
`;

/* ---------- view ---------- */

const View = styled.main`
  position: relative;
  flex: 1;
  display: flex;
  flex-direction: column;
  background: #000;
`;
const ViewTitle = styled.div`
  height: 26px;
  flex: none;
  display: flex;
  align-items: center;
  padding: 5px 1px 0 1px;
  background: linear-gradient(#8fb0d8, #a1c1e2 50%, #b9d2ec);
  font: 10.100px ${ui};
  letter-spacing: -0.200px;
`;
const SysBox = styled.span`
  width: 13px;
  height: 13px;
  margin-right: 6px;
  border-radius: 2px;
  border: 1px solid #b9c4d4;
  background: #dfe6ee;
  display: flex;
  align-items: center;
  justify-content: center;
  &::after { content: ''; width: 7px; height: 7px; background: #4a4a54; }
`;
const Caption = styled.span<{ $red?: boolean }>`
  width: 28px;
  height: 17px;
  margin-left: 1px;
  border: 1px solid ${(p) => (p.$red ? '#8c2a22' : '#7791b3')};
  border-radius: 2px;
  background: ${(p) => (p.$red ? 'linear-gradient(#e58d7e, #c5382a 50%, #d8604c)' : 'linear-gradient(#d2e1f2, #a5c0df 50%, #b7d0ea)')};
  display: flex;
  align-items: center;
  justify-content: center;
`;
const ViewTools = styled.div`
  height: 16px;
  flex: none;
  display: flex;
  align-items: center;
  background: #f2eff0;
  border-bottom: 1px solid #c9c9c9;
  overflow: hidden;
`;
const Drawing = styled.svg`
  width: 1090px;
  height: 538px;
`;
const GhostTip = styled.div`
  position: absolute;
  left: 0;
  top: 64px;
  width: 43px;
  height: 16px;
  background: #131313;
  color: #2b2b2b;
  font: 10px/15px ${ui};
  overflow: hidden;
  white-space: nowrap;
`;
const Dialog = styled.section`
  position: absolute;
  left: 177px;
  top: 261px;
  width: 184px;
  height: 84px;
  background: #f0f0f0;
  border: 1px solid #fff;
`;
const DialogTitle = styled.div`
  height: 20px;
  background: #fff;
  display: flex;
  align-items: center;
  padding: 0 12px 2px 1px;
  color: #777;
  font: 10px ${ui};
  letter-spacing: -0.250px;
`;
const DialogBody = styled.div`
  display: flex;
  padding: 5px 0 0 14px;
`;
const DialogCol = styled.div<{ $w: number; $gap: number; $top?: number }>`
  width: ${(p) => p.$w}px;
  display: flex;
  flex-direction: column;
  align-items: center;
  gap: ${(p) => p.$gap}px;
  padding-top: ${(p) => p.$top ?? 0}px;
`;
const ModeRow = styled.div`
  width: 73px;
  height: 17px;
  display: flex;
  align-items: center;
  border-top: 1px solid #a5a5a5;
  border-left: 1px solid #a5a5a5;
`;
const Mode = styled.span<{ $on?: boolean }>`
  width: 14px;
  height: 14px;
  display: flex;
  align-items: center;
  justify-content: center;
  ${(p) => p.$on && css`background: #fbd79a; box-shadow: inset 0 0 0 1px #8f8a78;`}
`;

/* ---------- bottom ---------- */

const BottomRow = styled.div`
  height: 23px;
  flex: none;
  display: flex;
  border-bottom: 1px solid #a9a9a9;
  border-top: 1px solid #fafafa;
`;
const BottomStrip = styled.div`
  width: 856px;
  display: flex;
  align-items: center;
  background: linear-gradient(#fbfbfb, #dedede);
  border-radius: 0 4px 4px 0;
`;
const NumKey = styled.span<{ $on?: boolean }>`
  width: 12px;
  height: 17px;
  font: 10px/17px ${arial};
  text-align: center;
  border-right: 1px solid #777;
  background: #ececec;
  ${(p) => p.$on && css`background: linear-gradient(#f6c06a, #fbdf9f); color: #8a3f10; font-weight: bold;`}
`;
const Axis = styled.b<{ $w: number }>`
  width: ${(p) => p.$w}px;
  text-align: center;
  font: bold 11px ${ui};
`;
const Field = styled.span`
  width: 120px;
  height: 15px;
  padding-left: 3px;
  border: 1px solid #b9b9b9;
  background: #fff;
  color: #777;
  font: 9.400px/13px ${arial};
`;
const StatusBar = styled.footer`
  height: 23px;
  flex: none;
  display: flex;
  align-items: center;
  font: 9.500px ${arial};
  letter-spacing: -0.030px;
`;
const StatusCell = styled.span<{ $w: number; $start?: boolean }>`
  flex: none;
  width: ${(p) => p.$w}px;
  height: 21px;
  display: flex;
  align-items: center;
  justify-content: ${(p) => (p.$start ? 'flex-start' : 'center')};
  border-left: 1px solid #9d9d9d;
  white-space: nowrap;
`;
const StatusMessage = styled.span`
  width: 342px;
  padding: 0 0 0 2px;
  white-space: nowrap;
`;
const TaskBar = styled.div`
  height: 33px;
  flex: none;
  display: flex;
  background: #3e3027;
  border-top: 1px solid #222;
`;
const Start = styled.div`
  width: 40px;
  display: flex;
  align-items: center;
  justify-content: center;
`;
const SearchBox = styled.div`
  width: 24px;
  background: #f2f2f2;
  display: flex;
  align-items: center;
  padding-left: 9px;
  overflow: hidden;
`;
const Banner = styled.div`
  width: 1152px;
  flex: none;
  padding-left: 9px;
  background: #18188a;
  border-radius: 3px 0 0 0;
  color: #f1f4ff;
  font: 500 20.450px/37px Roboto, sans-serif;
  white-space: nowrap;
`;
const Clock = styled.div`
  width: 16px;
  display: flex;
  flex-direction: column;
  padding: 1px 0 0 1px;
  color: #f3f0ee;
  font: 8.500px/15px ${ui};
  letter-spacing: -0.200px;
  white-space: nowrap;
`;
const Tray = styled.div`
  width: 44px;
  padding-right: 3px;
  display: flex;
  align-items: center;
  justify-content: center;
  border-right: 1px solid #8a8079;
`;

/* ---------- channel overlay ---------- */

const Subscribed = styled.div`
  position: absolute;
  left: 864px;
  top: 8px;
  width: 144px;
  height: 30px;
  border-radius: 15px;
  background: #fff;
  display: flex;
  align-items: center;
  padding-left: 19px;
  color: #666;
  font: bold 9.300px "Liberation Sans", sans-serif;
  letter-spacing: -0.400px;
`;
const SubscribedLabel = styled.span`
  width: 57px;
  margin: 0 12px 0 12px;
`;
const Channel = styled.div`
  position: absolute;
  left: 1068px;
  top: 9px;
  height: 23px;
  display: flex;
  align-items: center;
  gap: 3px;
`;
const ChannelName = styled.svg`
  overflow: visible;
  filter: drop-shadow(1px 2px 1px #777);
`;
const PointerOverlay = styled.svg`
  position: absolute;
  left: 121px;
  top: 111px;
`;

const menus: [string, number][] = [
  ['File', 26], ['Edit', 27], ['Element', 45], ['Settings', 46], ['Tools', 34],
  ['Utilities', 42], ['Workspace', 58], ['Window', 44], ['Help', 30],
];
const views = ['cube', 'page', 'refs', 'cell', 'raster', 'green', 'stack', 'snapfind', 'point'];
const palette: [string, number, string[]][] = [
  ['Q', 38, ['lineb', 'line', 'multi', 'plus', 'poly', 'stream', 'curve', 'angle', 'mindist', 'perp']],
  ['W', 20, ['rect', 'shape', 'ortho', 'polygon']],
  ['E', 20, ['circle', 'ellipse', 'arc', 'half', 'quarter', 'arcup', 'arcs', 'arcm']],
  ['R', 20, ['hatch', 'xhatch', 'pattern', 'lpat', 'patq', 'patm', 'pate', 'patx']],
  ['T', 20, ['tag', 'tag2', 'tagq', 'tag3', 'tagx']],
  ['A', 39, ['A1', 'A2', 'A3', 'A4', 'A5', 'A6', 'A7', 'A8', 'A9', 'A10', 'A11', 'A12', 'A13', 'A14']],
  ['S', 20, ['star1', 'star4', 'star2', 'staro', 'starq', 'leader', 'stars', 'table']],
  ['D', 19, ['D1', 'D2', 'D3', 'D4', 'D5', 'D6']],
  ['F', 21, ['F1', 'F2', 'F3', 'F4', 'F5', 'F6', 'F7']],
];
const taskTools = ['arrow', 'fence', 'copyT', 'brushT', 'palette', 'bulb', 'filletT', 'xred', 'measure'];

const MainTools = () => (
  <ToolRow>
    <ToolStrip>
      <Spacer $w={2} /><Grip />
      <Slot $w={20}><Icon n="models" s={17} /></Slot>
      <Slot $w={18}><Caret /></Slot>
      <Combo $w={113}>Default<Caret /></Combo>
      <Spacer $w={4} />
      {['level', 'style', 'weight', 'fill', 'trans'].map((n) => (
        <React.Fragment key={n}>
          <Divider />
          <Slot $w={20}><Icon n={n} /></Slot>
          <Slot $w={15}>0</Slot>
          <Slot $w={18.7}><Caret /></Slot>
        </React.Fragment>
      ))}
      <Spacer $w={2} />
      <Grip />
      {views.map((n) => (
        <React.Fragment key={n}>
          <Slot $w={18}><Icon n={n} s={15} /></Slot>
          <Slot $w={13.3}><Caret /></Slot>
        </React.Fragment>
      ))}
      <Spacer $w={1} />
      {['info', 'search', 'lib', 'crossed', 'stop'].map((n) => <Slot key={n} $w={18.7}><Icon n={n} /></Slot>)}
      <Spacer $w={4} /><Grip />
      <Spacer $w={2} />
      {['copy', 'move', 'scale', 'rotate', 'mirror', 'array'].map((n) => <Slot key={n} $w={18.7}><Icon n={n} s={15} /></Slot>)}
      <Divider /><Spacer $w={2} />
      {['align', 'stretch', 'wave', 'trim'].map((n) => <Slot key={n} $w={18.7}><Icon n={n} s={15} /></Slot>)}
      <Spacer $w={1} /><Divider />
      <Slot $w={25}><Icon n="fillet" s={15} /></Slot>
      <Spacer $w={1} /><Divider />
      <Slot $w={16}><Icon n="bulb" /></Slot>
    </ToolStrip>
  </ToolRow>
);

const TaskPanel = () => (
  <Panel>
    <PanelHead>
      Tasks
      <HeadGlyphs>
        <Caret $s={5} />
        <svg width="9" height="10" viewBox="0 0 9 10" stroke="#222" fill="none"><path d="M3 1.500h3v4H3zM1.500 5.500h6M4.500 6v3.500" /></svg>
        <svg width="11" height="11" viewBox="0 0 11 11" stroke="#000" strokeWidth="2.200"><path d="M1 1l9 9M10 1l-9 9" /></svg>
      </HeadGlyphs>
    </PanelHead>
    <TaskSelect>
      <Icon n="house" s={10} />Tasks
      <SelectArrow><Caret $s={2} /></SelectArrow>
    </TaskSelect>
    <TaskTools>
      {taskTools.map((n, i) => (
        <TaskTool key={n} $on={i === 0 || i === 6}>
          <Icon n={n} s={17} />
          <KeyBadge>{i + 1}</KeyBadge>
          {((i > 0 && i < 6) || i === 8) && <MoreDot />}
        </TaskTool>
      ))}
    </TaskTools>
    <DrawHead>
      <Icon n="drawhead" s={11} />Drawing
      <HeadGlyphs>
        <svg width="32" height="10" viewBox="0 0 32 10" fill="#333">
          <path d="M0 1h3.500v3.500H0zM4.500 1H8v3.500H4.500zM0 5.500h3.500V9H0zM4.500 5.500H8V9H4.500zM12 1h8v1.300h-8zM12 4.300h8v1.300h-8zM12 7.600h8v1.300h-8zM24 1h8v3h-8zM24 5.500h8v3h-8z" />
        </svg>
        <svg width="8" height="6" viewBox="0 0 8 6" fill="none" stroke="#222" strokeWidth="1.800"><path d="M1 5l3-3 3 3" /></svg>
      </HeadGlyphs>
    </DrawHead>
    <Palette>
      {palette.map(([key, h, icons]) => (
        <PaletteRow key={key} $h={h}>
          <RowKey>{key}</RowKey>
          <RowIcons>{icons.map((n) => <Icon key={n} n={n} />)}</RowIcons>
        </PaletteRow>
      ))}
    </Palette>
    {[['dcomp', 'Drawing Composition'], ['terrain', 'Terrain Model']].map(([n, label]) => (
      <Group key={n}>
        <Icon n={n} s={12} />{label}
        <HeadGlyphs>
          <svg width="8" height="6" viewBox="0 0 8 6" fill="#333"><path d="M0 0l4 2 4-2v2L4 6 0 2z" /></svg>
        </HeadGlyphs>
      </Group>
    ))}
    <Tabs>
      <Tab $w={47} $on><Icon n="house" s={11} />Tasks</Tab>
      <Tab $w={93}><Icon n="dcomp" s={11} />Project Explorer</Tab>
    </Tabs>
  </Panel>
);

const ViewWindow = () => (
  <View>
    <ViewTitle>
      <SysBox />View 1, Default
      <Push />
      <Caption><svg width="11" height="5"><rect x=".5" y=".5" width="10" height="4" rx="1" fill="#fff" stroke="#5b6b80" /></svg></Caption>
      <Caption><svg width="14" height="13" viewBox="0 0 14 13" fill="none" stroke="#4b5a70" strokeWidth="1"><path d="M5 .5h8.500v8H10V4H5z" fill="#fff" /><path d="M.5 4.500h8v8h-8z" fill="#fff" /><path d="M3 7.500h3v2.500H3z" /></svg></Caption>
      <Caption $red><svg width="12" height="10" viewBox="0 0 12 10"><path d="M2 1.500l8 7M10 1.500l-8 7" stroke="#5d2420" strokeWidth="4" /><path d="M2 1.500l8 7M10 1.500l-8 7" stroke="#fff" strokeWidth="2.500" /></svg></Caption>
    </ViewTitle>
    <ViewTools>
      <Slot $w={15}><Icon n="vattr" s={12} /></Slot>
      <Slot $w={13}><Caret $s={3} /></Slot>
      <Slot $w={14}><Icon n="vstyle" s={13} /></Slot>
      <Slot $w={14}><Icon n="sun" s={12} /></Slot>
      <Slot $w={15}><Caret $s={3} /></Slot>
      <Divider $h={13} /><Spacer $w={2} />
      {['brush', 'zin', 'zout', 'warea', 'fit', 'rot', 'hand'].map((n) => <Slot key={n} $w={14.7}><Icon n={n} s={12} /></Slot>)}
      <Spacer $w={1} /><Divider $h={13} /><Spacer $w={2} />
      <Slot $w={14.7}><Icon n="vprev" s={12} /></Slot>
      <Slot $w={14.7}><Icon n="vnext" s={12} /></Slot>
      <Spacer $w={1} /><Divider $h={13} /><Spacer $w={2} />
      {['vcopy', 'cubeclip', 'clipmask'].map((n) => <Slot key={n} $w={14.7}><Icon n={n} s={12} /></Slot>)}
    </ViewTools>
    <Drawing viewBox="190 103 1090 538" fill="none" stroke="#e4e4e4" strokeWidth="1">
      <circle cx="356.500" cy="110" r="77" />
      <circle cx="356.500" cy="219" r="32" />
      <path d="M324.500 219.500h-6a38.300 38.300 0 0 0 76.600 0h-6" />
      <circle cx="248" cy="111" r="32" />
      <path d="M209.500 103v8a38.300 38.300 0 0 0 38.300 38.300v-6" />
      <circle cx="465" cy="111" r="32" />
      <path d="M503.500 103v8a38.300 38.300 0 0 1-38.300 38.300v-6" />
      <path d="M723.500 100v65.500h128V100M755.500 100v65M787.500 100v65M819.500 100v65M723.500 120.500h128M723.500 146.500h128" />
      {[120.5, 146.5].map((y) => [755.5, 787.5, 819.5].map((x) => <circle key={`${x}-${y}`} cx={x} cy={y} r="6.300" />))}
      <path d="M983.500 100v96.500h115" />
      <path d="M1099 100v97" stroke="#989898" strokeWidth="2" />
      <path d="M983.500 119.500A38.500 38.500 0 0 0 1022 81M1099 119.500A38.500 38.500 0 0 1 1060.500 81M983.500 158.500a38.500 38.500 0 0 1 38.500 38M1099 158.500a38.500 38.500 0 0 0-38.500 38" />
      <rect x="467" y="456.500" width="128" height="64" rx="19" />
      <path d="M753.500 414.500h102l13 13v38.500l-13 13h-102l-13-13v-38.500z" />
      <g transform="translate(985 203) scale(.84 1)">
        <text fontFamily="Roboto, sans-serif" fontStyle="italic" fontSize="16.500" fill="#5c5c5c" stroke="none" textLength="251">Hariprasad Chandrasekar</text>
      </g>
    </Drawing>
    <GhostTip>ular Fillet</GhostTip>
    <Dialog>
      <DialogTitle>
        <Icon n="dlg" s={14} /><Spacer $w={3} />Element ...
        <Push />
        <svg width="92" height="11" viewBox="0 0 92 11" fill="none" stroke="#888">
          <path d="M2 5.500h8" /><path d="M40.500 1.500h7.500v7.500h-7.500z" stroke="#e3e3e3" /><path d="M80 1.500l8 8M88 1.500l-8 8" />
        </svg>
      </DialogTitle>
      <DialogBody>
        <DialogCol $w={73} $gap={6}>
          <ModeRow>{['target', 'eblock', 'epara', 'ecircle', 'eline'].map((n, i) => <Mode key={n} $on={i === 0}><Icon n={n} s={12} /></Mode>)}</ModeRow>
          <ModeRow>{['enew', 'eadd', 'esub', 'einv', 'eall'].map((n, i) => <Mode key={n} $on={i === 0}><Icon n={n} s={12} /></Mode>)}</ModeRow>
        </DialogCol>
        <Spacer $w={33} />
        <DialogCol $w={20} $gap={9} $top={3}><Icon n="edisable" s={15} /><Icon n="ecursor" s={16} /></DialogCol>
        <Spacer $w={9} />
        <DialogCol $w={22} $gap={0} $top={39}><Caret /></DialogCol>
      </DialogBody>
    </Dialog>
  </View>
);

const BottomTools = () => (
  <BottomRow>
    <BottomStrip>
      <Spacer $w={2} /><Grip />
      <Slot $w={18}><Icon n="back" s={14} /></Slot>
      <Slot $w={14}><Caret $s={3} $c="#666" /></Slot>
      <Slot $w={18}><Icon n="fwd" s={14} /></Slot>
      <Slot $w={14}><Caret $s={3} $c="#666" /></Slot>
      <Slot $w={18}><Icon n="axis" s={14} /></Slot>
      <Slot $w={12.5}><Caret $s={3} $c="#666" /></Slot>
      <Combo $w={112}><ComboLabel><Icon n="vgroup" s={11} />Default</ComboLabel><Caret /></Combo>
      <Spacer $w={5} />
      <Slot $w={18}><Icon n="vgroup" s={15} /></Slot>
      <Spacer $w={4.5} />
      {[1, 2, 3, 4, 5, 6, 7, 8].map((n) => <NumKey key={n} $on={n === 1}>{n}</NumKey>)}
      <Spacer $w={5} /><Grip />
      <Spacer $w={3.5} />
      <Axis $w={18}>X</Axis><Field>358.7643</Field>
      <Spacer $w={3} /><Divider />
      <Axis $w={20}>Y</Axis><Field>25.9175</Field>
      <Spacer $w={10} /><Grip /><Spacer $w={2} />
      <Slot $w={19} $pressed><Icon n="snapx" s={15} /></Slot>
      <Spacer $w={2} /><Divider />
      <Slot $w={19}><Icon n="n1" s={13} /></Slot>
      <Slot $w={19} $pressed><Icon n="n2" s={16} /></Slot>
      {['n3', 'n4', 'n5', 'n6', 'n7', 'n8', 'n9', 'n10'].map((n) => <Slot key={n} $w={18.7}><Icon n={n} s={14} /></Slot>)}
    </BottomStrip>
  </BottomRow>
);

export default function App() {
  return (
    <Window>
      <Global />
      <TitleBar>
        <Icon n="app" s={13} />
        <TitleText>Exercises.dgn [2D - V8 DGN] - MicroStation V8i (SELECTseries 3)</TitleText>
        <svg width="88" height="12" viewBox="0 0 88 12" fill="none" stroke="#444">
          <path d="M2 6.500h8" stroke="#aaa" /><path d="M41.500 3.500h5v5h-5zM43.500 3V1.500h5v5H47M79.500 1.500l7.500 8M87 1.500l-7.500 8" />
        </svg>
      </TitleBar>
      <MenuBar>
        <Grip /><Spacer $w={8} />
        {menus.map(([m, w]) => <MenuItem key={m} $w={w}>{m}</MenuItem>)}
      </MenuBar>
      <MainTools />
      <Body><TaskPanel /><ViewWindow /></Body>
      <BottomTools />
      <StatusBar>
        <StatusMessage>Element Selection &gt; Identify element to add to set</StatusMessage>
        <Grip /><Spacer $w={2} />
        <StatusCell $w={526} />
        <StatusCell $w={25}><Icon n="snapmode" s={17} /></StatusCell>
        <StatusCell $w={24}><Icon n="lock" s={10} /></StatusCell>
        <StatusCell $w={100} $start>Default</StatusCell>
        <StatusCell $w={90} />
        <StatusCell $w={24} /><StatusCell $w={24} /><StatusCell $w={24} />
        <StatusCell $w={24}><Icon n="scroll" s={10} /></StatusCell>
        <StatusCell $w={24}><Icon n="home" s={11} /></StatusCell>
        <StatusCell $w={24} />
        <StatusCell $w={24}><Icon n="disk" s={11} /></StatusCell>
      </StatusBar>
      <TaskBar>
        <Start><svg width="14" height="14" viewBox="0 0 14 14" fill="#fff"><path d="M0 2l6-.8v5.300H0zM6.700 1.100L14 0v6.500H6.700zM0 7.200h6v5.400L0 11.800zM6.700 7.200H14V14l-7.300-1z" /></svg></Start>
        <SearchBox><svg width="16" height="16" viewBox="0 0 16 16" fill="none" stroke="#222" strokeWidth="1.200"><circle cx="9" cy="6" r="4.300" /><path d="M6 9.500L1 14.500" /></svg></SearchBox>
        <Banner>Microstation Tutorial &amp; Shortcuts // Ellipse, Trim Multiple, Chamfer, Fillet, Draw Inclined Lines with Degree, Minute &amp; Seconds</Banner>
        <Clock><span>AM</span><span>-24</span></Clock>
        <Tray><svg width="15" height="15" viewBox="0 0 15 15" fill="none" stroke="#eee"><path d="M1 1.500h13v10H9.500L7.500 14l-2-2.500H1z" /></svg></Tray>
      </TaskBar>
      <Subscribed>
        <svg width="14" height="14" viewBox="0 0 14 14" fill="#1680f0"><path d="M0 6h3.500v7H0zM4.500 6L7 1c2 0 2 1.500 1.500 4H13v3l-1 5H4.500z" /></svg>
        <SubscribedLabel>SUBSCRIBED</SubscribedLabel>
        <svg width="12" height="13" viewBox="0 0 12 13" fill="#0a0a0a" stroke="#0a0a0a"><path d="M6 1C3 1 3 4 2.500 7L1 9.500h10L9.500 7C9 4 9 1 6 1z" /><path d="M4.500 11h3v1h-3zM1 2L0 5M11 2l1 3" /></svg>
      </Subscribed>
      <Channel>
        <svg width="26" height="18" viewBox="0 0 27 19"><rect width="27" height="19" rx="4" fill="#f00" /><path d="M10.500 6v7l6.500-3.500z" fill="#fff" /></svg>
        <ChannelName width="170" height="22" viewBox="0 0 170 22">
          <text x="3" y="16" fontFamily="Lato, sans-serif" fontWeight="900" fontSize="16.500" textLength="165" lengthAdjust="spacingAndGlyphs" fill="#fff" stroke="#000" strokeWidth="3.500" strokeLinejoin="round" paintOrder="stroke">Hariprasad Chandrasekar</text>
        </ChannelName>
      </Channel>
      <PointerOverlay width="10" height="14" viewBox="0 0 10 14"><path d="M1 1v10l2.500-2 2 4 2-1-2-4H9z" fill="#fff" stroke="#333" /></PointerOverlay>
    </Window>
  );
}
